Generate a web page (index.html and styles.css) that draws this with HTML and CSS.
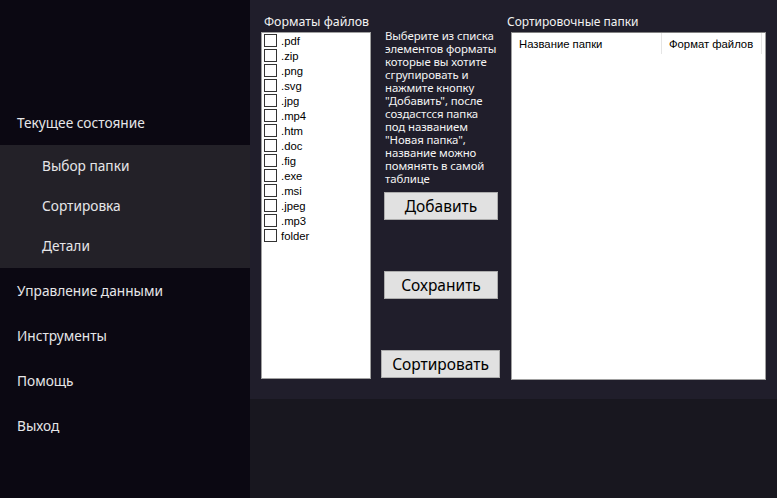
FILE: index.html
```html
<!DOCTYPE html>
<html lang="ru">
<head>
<meta charset="utf-8">
<link rel="stylesheet" href="styles.css">
</head>
<body>
<div class="app">
  <aside class="sidebar">
    <div class="nav-item">Текущее состояние</div>
    <div class="submenu">
      <div class="sub-item">Выбор папки</div>
      <div class="sub-item">Сортировка</div>
      <div class="sub-item">Детали</div>
    </div>
    <div class="nav-item">Управление данными</div>
    <div class="nav-item">Инструменты</div>
    <div class="nav-item">Помощь</div>
    <div class="nav-item">Выход</div>
  </aside>
  <main class="main">
    <section class="panel">
      <div class="formats">
        <div class="caption">Форматы файлов</div>
        <div class="listbox">
          <label class="row"><span class="cb"></span>.pdf</label>
          <label class="row"><span class="cb"></span>.zip</label>
          <label class="row"><span class="cb"></span>.png</label>
          <label class="row"><span class="cb"></span>.svg</label>
          <label class="row"><span class="cb"></span>.jpg</label>
          <label class="row"><span class="cb"></span>.mp4</label>
          <label class="row"><span class="cb"></span>.htm</label>
          <label class="row"><span class="cb"></span>.doc</label>
          <label class="row"><span class="cb"></span>.fig</label>
          <label class="row"><span class="cb"></span>.exe</label>
          <label class="row"><span class="cb"></span>.msi</label>
          <label class="row"><span class="cb"></span>.jpeg</label>
          <label class="row"><span class="cb"></span>.mp3</label>
          <label class="row"><span class="cb"></span>folder</label>
        </div>
      </div>
      <div class="actions">
        <p class="hint">Выберите из списка элементов форматы которые вы хотите сгрупировать и нажмите кнопку "Добавить", после создастсся папка под названием "Новая папка", название можно помянять в самой таблице</p>
        <button class="btn btn-add">Добавить</button>
        <button class="btn btn-save">Сохранить</button>
        <button class="btn btn-sort">Сортировать</button>
      </div>
      <div class="folders">
        <div class="caption caption-right">Сортировочные папки</div>
        <div class="table">
          <div class="thead">
            <div class="th th-name">Название папки</div>
            <div class="th th-format">Формат файлов</div>
          </div>
        </div>
      </div>
    </section>
    <div class="footer-area"></div>
  </main>
</div>
</body>
</html>
```

FILE: styles.css
```css
* { box-sizing: border-box; }
html, body { margin: 0; padding: 0; }
body {
  width: 777px;
  height: 498px;
  overflow: hidden;
  background: #18171f;
  font-family: "Noto Sans", "Liberation Sans", sans-serif;
}
.app {
  display: flex;
  height: 498px;
}
.sidebar {
  width: 250px;
  flex: none;
  background: #0b0812;
  padding-top: 100px;
  color: #e6e6e8;
  font-size: 13.7px;
}
.nav-item {
  height: 45px;
  display: flex;
  align-items: center;
  padding-left: 17px;
  padding-bottom: 1px;
}
.submenu {
  background: #232128;
  padding-bottom: 3px;
}
.sub-item {
  height: 40px;
  display: flex;
  align-items: center;
  padding-left: 42px;
}
.main {
  flex: 1;
  display: flex;
  flex-direction: column;
}
.panel {
  height: 399px;
  background: #201e2b;
  display: flex;
  padding: 14px 0 0 11px;
}
.footer-area {
  flex: 1;
  background: #18171f;
}
.caption {
  color: #f2f2f2;
  font-family: "Noto Sans", sans-serif;
  font-size: 12.4px;
  height: 18px;
  line-height: 15px;
  padding-left: 3px;
  white-space: nowrap;
}
.caption-right { padding-left: 0; margin-left: -4px; font-size: 12px; }
.formats {
  width: 110px;
  display: flex;
  flex-direction: column;
}
.listbox {
  width: 110px;
  height: 347px;
  background: #ffffff;
  border: 1px solid #a0a0a0;
}
.row {
  display: flex;
  align-items: center;
  height: 15px;
  font-family: "Liberation Sans", Arial, sans-serif;
  font-size: 11.3px;
  color: #000;
  padding-left: 2px;
}
.cb {
  width: 13px;
  height: 13px;
  border: 1px solid #333333;
  background: #fff;
  margin-right: 4px;
  flex: none;
}
.actions {
  width: 140px;
  display: flex;
  flex-direction: column;
  align-items: flex-start;
  padding-left: 13px;
}
.hint {
  margin: 15px 0 0 1px;
  width: 112px;
  color: #f4f4f4;
  font-family: "Noto Sans", sans-serif;
  font-size: 11.4px;
  line-height: 13px;
  letter-spacing: -0.1px;
}
.btn {
  background: #e1e1e1;
  border: 1px solid #adadad;
  color: #000;
  font-family: "Noto Sans", "Liberation Sans", sans-serif;
  font-size: 15.5px;
  padding: 0;
  height: 28px;
  line-height: 24px;
}
.btn-add { width: 114px; margin-top: 7px; }
.btn-save { width: 114px; margin-top: 51px; }
.btn-sort { width: 119px; margin-top: 51px; margin-left: -3px; }
.folders {
  width: 254px;
  display: flex;
  flex-direction: column;
}
.table {
  width: 255px;
  height: 348px;
  background: #ffffff;
  border: 1px solid #a0a0a0;
  border-top-color: #828282;
}
.thead {
  display: flex;
  height: 21px;
}
.th {
  font-family: "Liberation Sans", Arial, sans-serif;
  font-size: 11.3px;
  color: #000;
  display: flex;
  align-items: center;
  border-right: 1px solid #e5e5e5;
}
.th-name { width: 150px; padding-left: 7px; }
.th-format { width: 100px; padding-left: 7px; }
```
